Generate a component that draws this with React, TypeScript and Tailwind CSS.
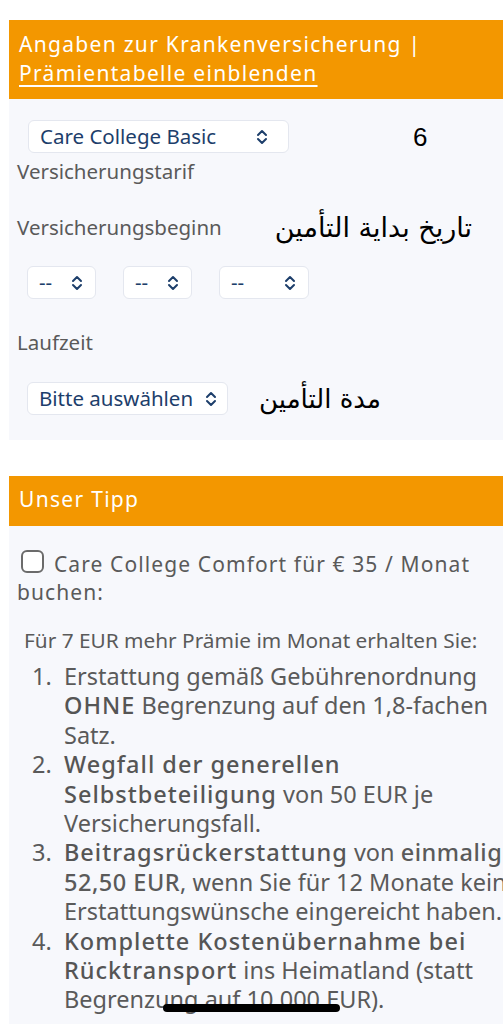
import React from "react";

const sans = "font-['Noto_Sans','Open_Sans',sans-serif]";
const arabic = "font-['DejaVu_Sans','Noto_Sans',sans-serif]";

function UpDown() {
  return (
    <svg viewBox="0 0 12 16" className="h-[16px] w-[12px] shrink-0" fill="none" stroke="#1d3e6b" strokeWidth={2} strokeLinecap="round" strokeLinejoin="round">
      <path d="M2 6 L6 2 L10 6" />
      <path d="M2 10 L6 14 L10 10" />
    </svg>
  );
}

function Select({ label, w, pr = "pr-[12px]" }: { label: string; w: string; pr?: string }) {
  return (
    <div className={`flex h-[33px] items-center justify-between rounded-[6px] border border-[#e4e7ef] bg-white pl-[11px] ${pr} ${w}`}>
      <span className="text-[20.5px] leading-none text-[#1d3e6b]">{label}</span>
      <UpDown />
    </div>
  );
}

const b = "font-medium tracking-[1px] text-[#555]";

const items: React.ReactNode[] = [
  <>
    Erstattung gemäß Gebührenordnung <b className={b}>OHNE</b> Begrenzung auf den 1,8-fachen Satz.
  </>,
  <>
    <b className={b}>Wegfall der generellen Selbstbeteiligung</b> von 50 EUR je Versicherungsfall.
  </>,
  <>
    <b className={b}>Beitragsrückerstattung</b> von <b className="font-medium tracking-[0.5px]">einmalig 52,50 EUR</b>, wenn Sie für 12 Monate keine Erstattungswünsche eingereicht haben.
  </>,
  <>
    <b className={b}>Komplette Kostenübernahme bei Rücktransport</b> ins Heimatland (statt Begrenzung auf 10.000 EUR).
  </>,
];

export default function App() {
  return (
    <div className={`relative h-[1024px] w-[503px] overflow-hidden bg-white ${sans}`}>
      <div className="ml-[9px] w-[545px] pt-[20px]">
        {/* Krankenversicherung */}
        <div className="h-[79px] bg-[#f39700] px-[10px] pt-[10px] text-[21px] leading-[29px] tracking-[1.3px] text-white">
          <div>Angaben zur Krankenversicherung |</div>
          <div className="underline underline-offset-[4px]">Prämientabelle einblenden</div>
        </div>
        <div className="h-[341px] bg-[#f7f8fc] px-[8px] pt-[21px] text-[#5a5a5a]">
          <div className="flex items-center">
            <div className="ml-[11px]">
              <Select label="Care College Basic" w="w-[261px]" pr="pr-[20px]" />
            </div>
            <span className="ml-[124px] font-['Liberation_Sans',sans-serif] text-[26px] leading-none text-black">6</span>
          </div>
          <div className="mt-[4px] text-[20.5px] leading-[28px]">Versicherungstarif</div>
          <div className="mt-[28px] flex items-center">
            <span className="text-[20.5px] leading-[28px]">Versicherungsbeginn</span>
            <span dir="rtl" className={`ml-[53px] text-[27px] leading-none text-black ${arabic}`}>
              تاريخ بداية التأمين
            </span>
          </div>
          <div className="mt-[25px] ml-[10px] flex gap-[27px]">
            <Select label="--" w="w-[69px]" />
            <Select label="--" w="w-[69px]" />
            <Select label="--" w="w-[90px]" />
          </div>
          <div className="mt-[29px] text-[20.5px] leading-[28px]">Laufzeit</div>
          <div className="mt-[26px] flex items-center">
            <div className="ml-[10px]">
              <Select label="Bitte auswählen" w="w-[201px]" pr="pr-[10px]" />
            </div>
            <span dir="rtl" className={`ml-[31px] text-[26px] leading-none text-black ${arabic}`}>
              مدة التأمين
            </span>
          </div>
        </div>

        <div className="h-[36px]" />

        {/* Unser Tipp */}
        <div className="flex h-[50px] items-center bg-[#f39700] px-[10px] pb-[2px] text-[21px] tracking-[1.3px] text-white">
          Unser Tipp
        </div>
        <div className="h-[520px] bg-[#f7f8fc] px-[8px] pt-[24px] text-[#5a5a5a]">
          <p className="w-[480px] text-[21px] leading-[28px] tracking-[1.1px]">
            <span className="ml-[4px] mr-[10px] inline-block h-[23px] w-[23px] rounded-[6px] border-2 border-[#6b6b6b] bg-white align-[-1px]" />
            Care College Comfort für € 35 / Monat buchen:
          </p>
          <p className="mt-[20px] pl-[7px] text-[20.8px] leading-[28px]">Für 7 EUR mehr Prämie im Monat erhalten Sie:</p>
          <ol className="mt-[8px] text-[23.5px] leading-[29.4px]">
            {items.map((it, i) => (
              <li key={i} className="flex">
                <span className="w-[47px] shrink-0 pl-[15px]">{i + 1}.</span>
                <span className="w-[470px]">{it}</span>
              </li>
            ))}
          </ol>
        </div>
      </div>
      <div className="absolute left-[163px] top-[1004px] h-[8px] w-[177px] rounded-full bg-black" />
    </div>
  );
}
